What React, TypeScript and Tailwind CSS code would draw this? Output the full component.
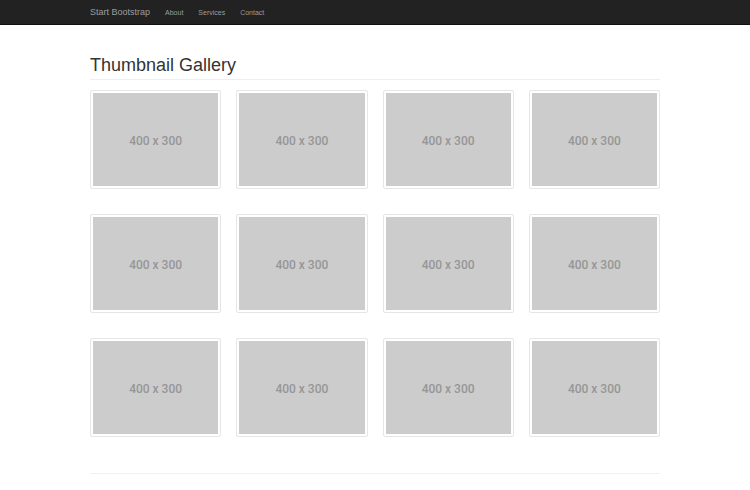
import React from 'react';

const Thumb: React.FC = () => (
  <a href="#" className="block border border-[#e6e6e6] bg-white p-[2px] rounded-[2px]">
    <div className="flex h-[93px] items-center justify-center pt-[2px] bg-[#cccccc] text-[12px] font-medium text-[#969696] [font-family:Roboto,'Liberation_Sans',sans-serif]">
      400 x 300
    </div>
  </a>
);

export default function App() {
  const thumbs = Array.from({ length: 12 });

  return (
    <div className="min-h-[490px] bg-white [font-family:'Liberation_Sans',Arial,sans-serif]">
      {/* Navbar */}
      <nav className="h-[25px] bg-[#222222] border-b border-[#111]">
        <div className="mx-auto flex h-full w-[570px] items-center pt-[2px]">
          <a href="#" className="text-[9px] text-[#9d9d9d]">Start Bootstrap</a>
          <ul className="ml-[15px] flex items-center gap-[15px] text-[7px] text-[#9d9d9d]">
            <li><a href="#">About</a></li>
            <li><a href="#">Services</a></li>
            <li><a href="#">Contact</a></li>
          </ul>
        </div>
      </nav>

      <div className="mx-auto w-[570px]">
        <div className="pt-[28px]">
          <h1 className="text-[18px] leading-[24px] text-[#333]">Thumbnail Gallery</h1>
          <div className="mt-[2px] border-t border-[#eeeeee]" />
        </div>

        <div className="mt-[10px] grid grid-cols-4 gap-x-[15px] gap-y-[25px]">
          {thumbs.map((_, i) => (
            <Thumb key={i} />
          ))}
        </div>

        <div className="mt-[36px] border-t border-[#f0f0f0]" />
      </div>
    </div>
  );
}
